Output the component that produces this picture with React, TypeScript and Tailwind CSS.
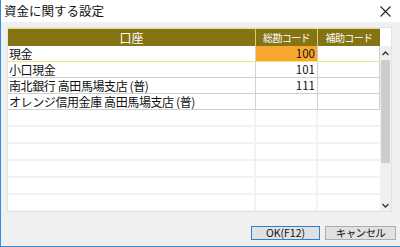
import React from "react";

const font = { fontFamily: '"Noto Sans CJK JP", "Noto Sans", sans-serif' };

type Row = { name: string; code: string; sel?: boolean };
const rows: Row[] = [
  { name: "現金", code: "100", sel: true },
  { name: "小口現金", code: "101" },
  { name: "南北銀行 高田馬場支店 (普)", code: "111" },
  { name: "オレンジ信用金庫 高田馬場支店 (普)", code: "" },
];

export default function App() {
  return (
    <div className="w-[400px] h-[247px] bg-[#f0f0f0] border-l border-b border-[#2f8ee3] flex flex-col text-[#111]" style={font}>
      <div className="h-[22px] bg-white flex items-center justify-between pl-[3px] pr-[9px] shrink-0">
        <span className="text-[12.5px] leading-none">資金に関する設定</span>
        <svg width="11" height="11" viewBox="0 0 11 11"><path d="M0.5 0.5 L10.5 10.5 M10.5 0.5 L0.5 10.5" stroke="#222" strokeWidth="1.1" /></svg>
      </div>
      <div className="pl-[6px] pt-[5px] flex flex-col">
        <div className="w-[385px] h-[185px] bg-white border border-[#e4e4e4] flex flex-col overflow-hidden">
          <div className="flex h-[18px] shrink-0">
            <div className="w-[372px] flex bg-[#857414] border-t border-[#e9e08a] text-white text-[10px] leading-none">
              <div className="w-[248px] flex items-center justify-center border-r border-[#d8cc7a] text-[12px]">口座</div>
              <div className="w-[62px] flex items-center justify-center border-r border-[#d8cc7a] tracking-[-0.6px]">総勘コード</div>
              <div className="w-[62px] flex items-center justify-center tracking-[-0.6px]">補助コード</div>
            </div>
          </div>
          <div className="flex flex-1">
            <div className="w-[372px] flex flex-col">
              {rows.map((r, i) => (
                <div
                  key={i}
                  className={
                    "flex h-[16px] text-[12px] leading-none border-b " +
                    (r.sel ? "border-[#f2e57e]" : "border-[#d0d0d0]")
                  }
                >
                  <div className="w-[248px] flex items-center pl-[1px] border-r border-[#d0d0d0] whitespace-nowrap tracking-[-0.4px]">{r.name}</div>
                  <div className={"w-[62px] flex items-center justify-end pr-[2px] border-r border-[#d0d0d0] text-[11.5px] " + (r.sel ? "bg-[#f8a72c]" : "")}>{r.code}</div>
                  <div className="w-[62px] border-r border-[#d0d0d0]"></div>
                </div>
              ))}
              {Array.from({ length: 6 }).map((_, i) => (
                <div key={"e" + i} className="flex h-[17px] border-b-2 border-[#f2f2f2] shrink-0">
                  <div className="w-[248px] border-r-2 border-[#f2f2f2]"></div>
                  <div className="w-[62px] border-r-2 border-[#f2f2f2]"></div>
                  <div className="w-[62px]"></div>
                </div>
              ))}
            </div>
            <div className="w-[13px] bg-[#f0f0f0] flex flex-col">
              <div className="h-[14px] flex items-center justify-center">
                <svg width="7" height="5" viewBox="0 0 7 5"><path d="M0.5 4 L3.5 1 L6.5 4" stroke="#333" strokeWidth="1.3" fill="none" /></svg>
              </div>
              <div className="h-[103px] bg-[#cdcdcd] mx-[1px]"></div>
              <div className="flex-1"></div>
              <div className="h-[14px] flex items-center justify-center">
                <svg width="7" height="5" viewBox="0 0 7 5"><path d="M0.5 1 L3.5 4 L6.5 1" stroke="#333" strokeWidth="1.3" fill="none" /></svg>
              </div>
            </div>
          </div>
        </div>
        <div className="flex justify-end gap-[5px] mt-[14px] pr-[4px] text-[10.5px] leading-none">
          <div className="w-[69px] h-[14px] flex items-center justify-center bg-[#e1e1e1] border border-[#2b7fd4]">OK(F12)</div>
          <div className="w-[71px] h-[14px] flex items-center justify-center bg-[#e1e1e1] border border-[#adadad] tracking-[-0.6px]">キャンセル</div>
        </div>
      </div>
    </div>
  );
}
